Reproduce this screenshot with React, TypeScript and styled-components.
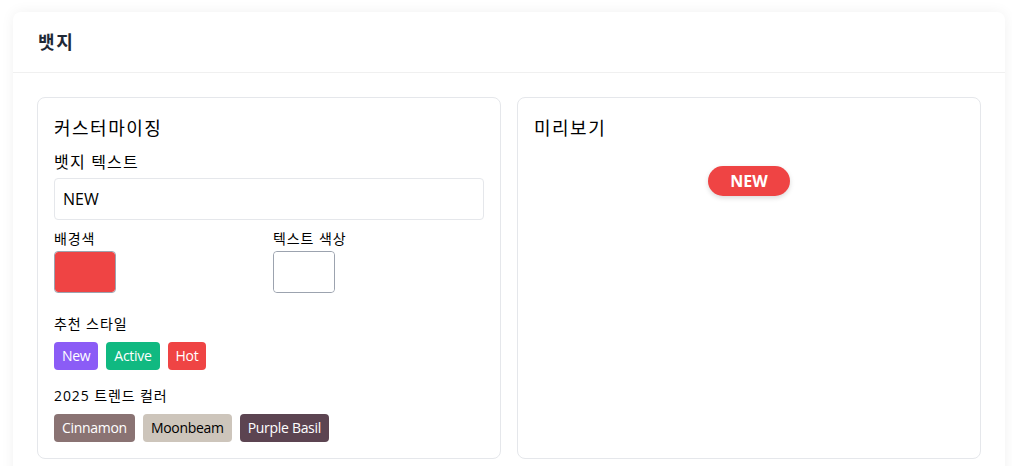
import React, { useState } from "react";
import styled, { createGlobalStyle } from "styled-components";

const GlobalStyle = createGlobalStyle`
  html, body {
    margin: 0;
    padding: 0;
    background: #ffffff;
  }
  body {
    font-family: "Open Sans", "Noto Sans CJK KR", sans-serif;
    color: #000;
  }
  * { box-sizing: border-box; }
`;

const Page = styled.div`
  padding: 12px 7px 0 13px;
`;

const Card = styled.section`
  background: #fff;
  border-radius: 8px;
  box-shadow: 0 0 14px rgba(0, 0, 0, 0.06);
`;

const CardHeader = styled.header`
  height: 61px;
  padding: 0 25px;
  display: flex;
  align-items: center;
  border-bottom: 1px solid #f0f0f0;
`;

const Title = styled.h2`
  margin: 0;
  font-size: 18px;
  line-height: 26px;
  font-weight: 700;
  letter-spacing: 1.8px;
  color: #1f2937;
`;

const CardBody = styled.div`
  padding: 24px;
  display: grid;
  grid-template-columns: 1fr 1fr;
  gap: 16px;
`;

const Panel = styled.div`
  border: 1px solid #e5e7eb;
  border-radius: 8px;
  padding: 16px;
  display: flex;
  flex-direction: column;
`;

const PanelTitle = styled.h3`
  margin: 0 0 8px;
  font-size: 18px;
  line-height: 28px;
  font-weight: 400;
  letter-spacing: 1.5px;
  color: #000;
`;

const FieldLabel = styled.label`
  display: block;
  font-size: 16px;
  line-height: 24px;
  letter-spacing: 1.2px;
  margin-bottom: 4px;
`;

const TextInput = styled.input`
  display: block;
  width: 100%;
  height: 42px;
  padding: 8px;
  font-family: inherit;
  font-size: 16px;
  line-height: 24px;
  color: #000;
  border: 1px solid #e5e7eb;
  border-radius: 4px;
  outline: none;
  margin-bottom: 9px;
`;

const ColorGrid = styled.div`
  display: grid;
  grid-template-columns: 1fr 1fr;
  gap: 8px;
  margin-bottom: 21px;
`;

const ColorField = styled.div`
  display: flex;
  flex-direction: column;
  align-items: flex-start;
`;

const SmallLabel = styled.div<{ $mb?: number }>`
  font-size: 14px;
  line-height: 20px;
  letter-spacing: 0.9px;
  margin-bottom: ${(p) => p.$mb ?? 8}px;
`;

const ColorInput = styled.input`
  -webkit-appearance: none;
  appearance: none;
  width: 62px;
  height: 42px;
  padding: 0;
  border: 1px solid #9ca3af;
  border-radius: 4px;
  background: transparent;
  cursor: pointer;
  overflow: hidden;
  &::-webkit-color-swatch-wrapper {
    padding: 0;
  }
  &::-webkit-color-swatch {
    border: none;
    border-radius: 3px;
  }
`;

const Section = styled.div<{ $mb?: number }>`
  margin-bottom: ${(p) => p.$mb ?? 0}px;
`;

const ChipRow = styled.div`
  display: flex;
  gap: 8px;
`;

const Chip = styled.button<{ $bg: string; $fg: string }>`
  height: 28px;
  padding: 0 8px;
  border: none;
  border-radius: 4px;
  background: ${(p) => p.$bg};
  color: ${(p) => p.$fg};
  font-family: inherit;
  font-size: 14px;
  line-height: 28px;
  letter-spacing: -0.3px;
  cursor: pointer;
`;

const PreviewArea = styled.div`
  display: flex;
  justify-content: center;
  padding-top: 16px;
`;

const Badge = styled.span<{ $bg: string; $fg: string }>`
  display: inline-flex;
  align-items: center;
  justify-content: center;
  height: 30px;
  padding: 0 22px;
  border-radius: 999px;
  background: ${(p) => p.$bg};
  color: ${(p) => p.$fg};
  font-size: 16px;
  font-weight: 700;
  box-shadow: 0 2px 5px rgba(0, 0, 0, 0.15);
`;

const presets = [
  { label: "New", bg: "#8b5cf6", fg: "#ffffff" },
  { label: "Active", bg: "#10b981", fg: "#ffffff" },
  { label: "Hot", bg: "#ef4444", fg: "#ffffff" },
];

const trends = [
  { label: "Cinnamon", bg: "#8a7373", fg: "#ffffff" },
  { label: "Moonbeam", bg: "#cdc5bb", fg: "#000000" },
  { label: "Purple Basil", bg: "#5c4451", fg: "#ffffff" },
];

export default function App() {
  const [text, setText] = useState("NEW");
  const [bg, setBg] = useState("#ef4444");
  const [fg, setFg] = useState("#ffffff");

  const apply = (b: string, f: string) => {
    setBg(b);
    setFg(f);
  };

  return (
    <>
      <GlobalStyle />
      <Page>
        <Card>
          <CardHeader>
            <Title>뱃지</Title>
          </CardHeader>
          <CardBody>
            <Panel>
              <PanelTitle>커스터마이징</PanelTitle>
              <FieldLabel htmlFor="badge-text">뱃지 텍스트</FieldLabel>
              <TextInput
                id="badge-text"
                value={text}
                onChange={(e) => setText(e.target.value)}
              />
              <ColorGrid>
                <ColorField>
                  <SmallLabel $mb={2}>배경색</SmallLabel>
                  <ColorInput
                    type="color"
                    value={bg}
                    onChange={(e) => setBg(e.target.value)}
                  />
                </ColorField>
                <ColorField>
                  <SmallLabel $mb={2}>텍스트 색상</SmallLabel>
                  <ColorInput
                    type="color"
                    value={fg}
                    onChange={(e) => setFg(e.target.value)}
                  />
                </ColorField>
              </ColorGrid>
              <Section $mb={16}>
                <SmallLabel>추천 스타일</SmallLabel>
                <ChipRow>
                  {presets.map((p) => (
                    <Chip
                      key={p.label}
                      $bg={p.bg}
                      $fg={p.fg}
                      onClick={() => apply(p.bg, p.fg)}
                    >
                      {p.label}
                    </Chip>
                  ))}
                </ChipRow>
              </Section>
              <Section>
                <SmallLabel>2025 트렌드 컬러</SmallLabel>
                <ChipRow>
                  {trends.map((p) => (
                    <Chip
                      key={p.label}
                      $bg={p.bg}
                      $fg={p.fg}
                      onClick={() => apply(p.bg, p.fg)}
                    >
                      {p.label}
                    </Chip>
                  ))}
                </ChipRow>
              </Section>
            </Panel>
            <Panel>
              <PanelTitle>미리보기</PanelTitle>
              <PreviewArea>
                <Badge $bg={bg} $fg={fg}>
                  {text}
                </Badge>
              </PreviewArea>
            </Panel>
          </CardBody>
        </Card>
      </Page>
    </>
  );
}
